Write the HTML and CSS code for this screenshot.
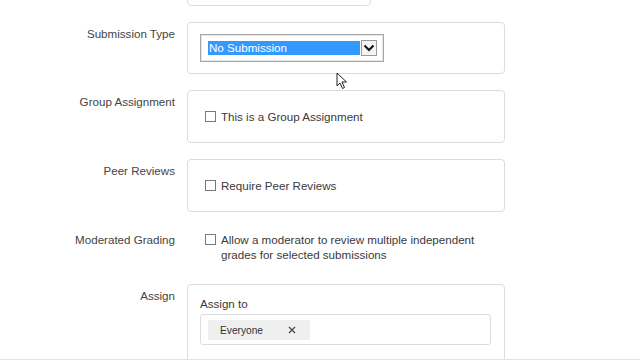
FILE: index.html
```html
<!DOCTYPE html>
<html lang="en">
<head>
    <meta charset="UTF-8">
    <meta name="viewport" content="width=device-width, initial-scale=1.0">
    <title>Edit Assignment</title>
    <link rel="stylesheet" href="styles.css">
</head>
<body>
    <div class="page">
        <div class="form">
            <div class="label"></div>
            <div class="box box-top">
                <div class="top-btn"></div>
            </div>

            <div class="label">Submission Type</div>
            <div class="box box-select">
                <div class="select">
                    <span class="selected">No Submission</span>
                    <span class="arrow">
                        <svg width="12" height="8" viewBox="0 0 12 8"><path d="M1.5 1.5 L6 6 L10.5 1.5" fill="none" stroke="#111" stroke-width="2"/></svg>
                    </span>
                </div>
            </div>

            <div class="label">Group Assignment</div>
            <div class="box box-check">
                <label class="check"><span class="checkbox"></span>This is a Group Assignment</label>
            </div>

            <div class="label">Peer Reviews</div>
            <div class="box box-check">
                <label class="check"><span class="checkbox"></span>Require Peer Reviews</label>
            </div>

            <div class="label">Moderated Grading</div>
            <div class="plain">
                <label class="check check-wrap"><span class="checkbox"></span><span>Allow a moderator to review multiple independent grades for selected submissions</span></label>
            </div>

            <div class="label">Assign</div>
            <div class="box box-assign">
                <div class="assign-title">Assign to</div>
                <div class="assign-input">
                    <span class="chip">Everyone
                        <svg class="chip-x" width="8" height="8" viewBox="0 0 8 8"><path d="M1 1 L7 7 M7 1 L1 7" stroke="#444" stroke-width="1.2"/></svg>
                    </span>
                </div>
            </div>
        </div>

        <svg class="cursor" width="12" height="18" viewBox="0 0 12 18">
            <path d="M1 1 L1 14 L4 11 L6.5 16.5 L8.5 15.5 L6 10 L10.5 10 Z" fill="#fff" stroke="#222" stroke-width="1" stroke-linejoin="round"/>
        </svg>
    </div>
</body>
</html>
```

FILE: styles.css
```css
body {
    font-family: "Liberation Sans", Arial, sans-serif;
    font-size: 11.6px;
    color: #3a3a3a;
    background-color: #fff;
    margin: 0;
    padding: 0;
    overflow: hidden;
}
.page {
    position: relative;
    height: 360px;
    overflow: hidden;
}
.page::after {
    content: "";
    position: absolute;
    left: 0;
    right: 0;
    bottom: 0;
    height: 1px;
    background-color: #e2e2e2;
}
.form {
    display: grid;
    grid-template-columns: 175px 318px;
    column-gap: 12px;
    row-gap: 16px;
    margin-top: -30px;
}
.label {
    text-align: right;
    padding-top: 4px;
    line-height: 15px;
    color: #444;
}
.box {
    border: 1px solid #dcdcdc;
    border-radius: 4px;
    box-sizing: border-box;
}
.box-top {
    width: 184px;
    height: 36px;
    position: relative;
}
.top-btn {
    position: absolute;
    right: 4px;
    top: -4px;
    width: 20px;
    height: 9px;
    border: 1px solid #d6d6d6;
    border-radius: 2px;
    background-color: #f2f2f2;
}
.box-select {
    padding: 11px 12px;
}
.select {
    width: 184px;
    height: 28px;
    box-sizing: border-box;
    border: 1px solid #a5a5a5;
    box-shadow: inset 0 0 0 1px #e6e6e6;
    display: flex;
    align-items: center;
    padding: 0 6px 0 7px;
}
.selected {
    background-color: #3399ff;
    color: #fff;
    width: 152px;
    height: 14px;
    line-height: 14px;
    padding-left: 1px;
}
.arrow {
    width: 16px;
    height: 16px;
    box-sizing: border-box;
    border: 1px solid #9a9a9a;
    background-color: #f4f4f4;
    display: flex;
    align-items: center;
    justify-content: center;
    margin-left: 1px;
}
.box-check {
    padding: 18px 17px;
}
.check {
    display: flex;
    align-items: center;
    line-height: 15px;
}
.checkbox {
    width: 11px;
    height: 11px;
    box-sizing: border-box;
    border: 1px solid #7a7a7a;
    background-color: #fff;
    margin-right: 5px;
    flex-shrink: 0;
}
.plain {
    padding: 4px 17px 6px 18px;
}
.check-wrap {
    align-items: flex-start;
}
.check-wrap .checkbox {
    margin-top: 2px;
}
.box-assign {
    padding: 11px 13px 40px 12px;
}
.assign-title {
    line-height: 15px;
    margin-bottom: 3px;
}
.assign-input {
    height: 31px;
    box-sizing: border-box;
    border: 1px solid #dcdcdc;
    border-radius: 3px;
    padding: 5px 7px;
}
.chip {
    display: inline-flex;
    align-items: center;
    justify-content: space-between;
    width: 102px;
    height: 20px;
    box-sizing: border-box;
    padding: 0 14px 0 12px;
    background-color: #efefef;
    font-size: 10.2px;
    color: #333;
}
.cursor {
    position: absolute;
    left: 336px;
    top: 72px;
}
```
